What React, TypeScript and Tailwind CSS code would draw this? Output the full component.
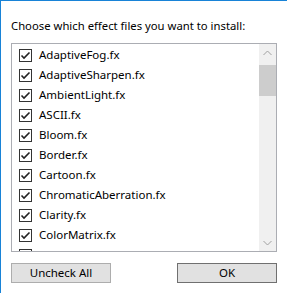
const effects = [
  "AdaptiveFog.fx",
  "AdaptiveSharpen.fx",
  "AmbientLight.fx",
  "ASCII.fx",
  "Bloom.fx",
  "Border.fx",
  "Cartoon.fx",
  "ChromaticAberration.fx",
  "Clarity.fx",
  "ColorMatrix.fx",
  "Curves.fx",
];

function CheckBox() {
  return (
    <div className="w-[13px] h-[13px] border border-[#333333] bg-white flex items-center justify-center shrink-0">
      <svg width="11" height="11" viewBox="0 0 11 11">
        <path d="M1.5 5.5 L4 8 L9.5 2.5" fill="none" stroke="#222" strokeWidth="1.6" />
      </svg>
    </div>
  );
}

function Chevron({ up }: { up?: boolean }) {
  return (
    <svg width="9" height="6" viewBox="0 0 9 6">
      <path
        d={up ? "M0.5 5 L4.5 1 L8.5 5" : "M0.5 1 L4.5 5 L8.5 1"}
        fill="none"
        stroke="#a0a0a0"
        strokeWidth="1"
      />
    </svg>
  );
}

export default function App() {
  return (
    <div
      className="w-[287px] h-[293px] bg-white border-l border-t border-[#1883d7] flex flex-col pl-[10px] pt-[17px] text-[11.3px] text-black overflow-hidden"
      style={{ fontFamily: '"Noto Sans", "Liberation Sans", sans-serif' }}
    >
      <div className="h-[16px] leading-[16px]">Choose which effect files you want to install:</div>

      <div className="mt-[9px] w-[266px] h-[209px] border border-[#abadb3] flex">
        <div className="flex-1 pt-px overflow-hidden">
          {effects.map((name) => (
            <div key={name} className="h-[20px] flex items-center pl-[7px] gap-[7px]">
              <CheckBox />
              <span className="leading-[16px] text-[11.5px]">{name}</span>
            </div>
          ))}
        </div>
        <div className="w-[17px] bg-[#f0f0f0] flex flex-col">
          <div className="h-[17px] flex items-center justify-center">
            <Chevron up />
          </div>
          <div className="mt-[4px] h-[31px] bg-[#cdcdcd]" />
          <div className="flex-1" />
          <div className="h-[17px] flex items-center justify-center">
            <Chevron />
          </div>
        </div>
      </div>

      <div className="mt-[11px] flex justify-between w-[266px]">
        <button className="w-[100px] h-[20px] bg-[#e1e1e1] border border-[#adadad] leading-[16px] text-[11.5px]">
          Uncheck All
        </button>
        <button className="w-[100px] h-[20px] bg-[#e1e1e1] border border-[#707070] leading-[16px] text-[11.5px]">
          OK
        </button>
      </div>
    </div>
  );
}
